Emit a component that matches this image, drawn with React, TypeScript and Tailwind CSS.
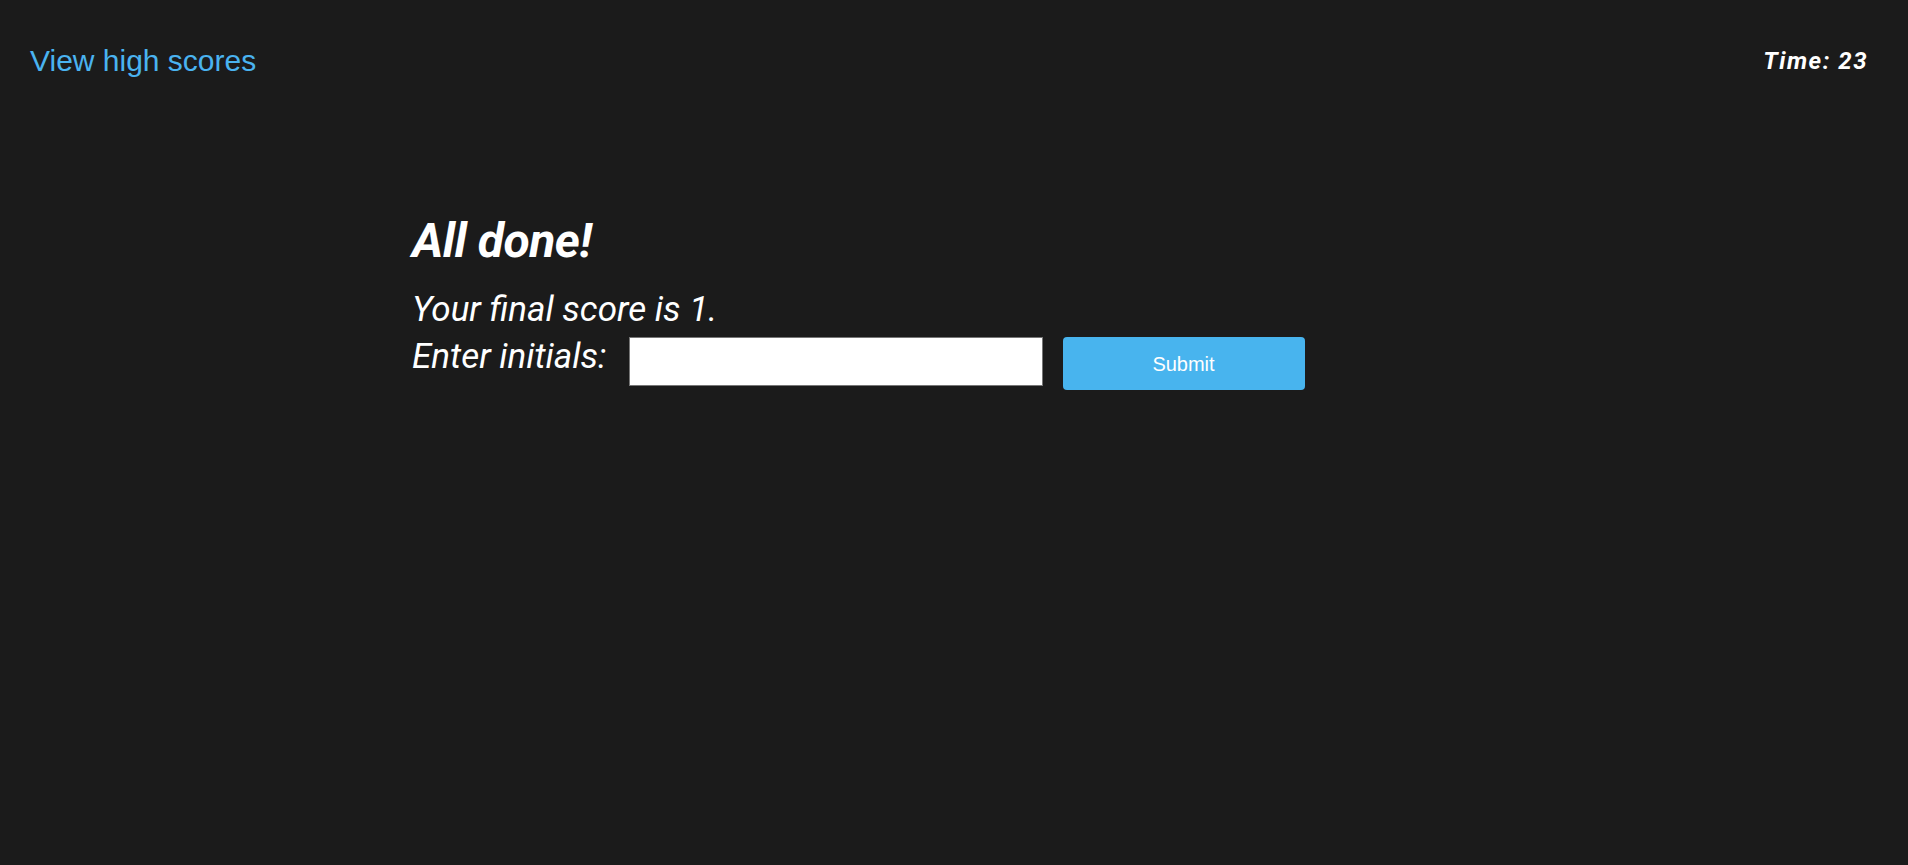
import React from 'react'

const App = () => {
    return (
        <div className="min-h-[865px] w-full bg-[#1b1b1b] text-white">
            <header className="flex items-start justify-between pl-[30px] pr-[40px] pt-[44px]">
                <a
                    href="#"
                    className="text-[30px] leading-[34px] text-[#4ab3f0]"
                    style={{ fontFamily: '"Liberation Sans", Arial, sans-serif' }}
                >
                    View high scores
                </a>
                <p
                    className="text-[24px] leading-[34px] font-bold italic tracking-[1.5px]"
                    style={{ fontFamily: 'Roboto, sans-serif' }}
                >
                    Time: 23
                </p>
            </header>

            <main className="ml-[412px] mt-[139px]" style={{ fontFamily: 'Roboto, sans-serif' }}>
                <h1 className="text-[48px] leading-[48px] font-bold italic tracking-[-0.5px]">All done!</h1>
                <p className="mt-[25px] text-[35px] leading-[40px] italic">Your final score is 1.</p>
                <form className="mt-[7px] flex items-start">
                    <label htmlFor="initials" className="text-[35px] leading-[40px] italic">
                        Enter initials:
                    </label>
                    <input
                        id="initials"
                        name="initials"
                        type="text"
                        className="ml-[22px] h-[49px] w-[414px] border border-[#767676] bg-white px-2 text-black focus:outline-none"
                    />
                    <button
                        type="button"
                        className="ml-[20px] h-[53px] w-[242px] rounded-[4px] bg-[#48b4ee] text-[20px] text-white"
                        style={{ fontFamily: '"Liberation Sans", Arial, sans-serif' }}
                    >
                        Submit
                    </button>
                </form>
            </main>
        </div>
    )
}

export default App
